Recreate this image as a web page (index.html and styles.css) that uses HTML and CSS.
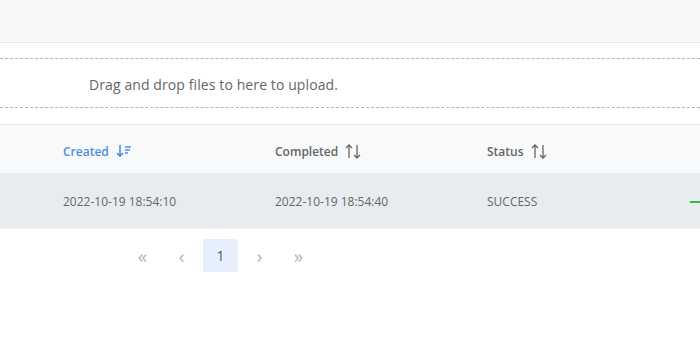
FILE: index.html
```html
<!DOCTYPE html>
<html lang="en">
<head>
    <meta charset="UTF-8">
    <title>Uploads</title>
    <link rel="stylesheet" href="styles.css">
</head>
<body>
    <div class="toolbar"></div>

    <div class="upload-area">
        <div class="dropzone">Drag and drop files to here to upload.</div>
    </div>

    <div class="table">
        <div class="table-row table-head">
            <div class="cell spacer"></div>
            <div class="cell sorted">
                <span>Created</span>
                <svg class="sort-icon" width="16" height="14" viewBox="0 0 16 14">
                    <path d="M4 1v11M1 9l3 3 3-3" fill="none" stroke="currentColor" stroke-width="1.6"/>
                    <path d="M9 3h6M9 6h5M9 9h3" fill="none" stroke="currentColor" stroke-width="1.6"/>
                </svg>
            </div>
            <div class="cell">
                <span>Completed</span>
                <svg class="sort-icon" width="16" height="17" viewBox="0 0 16 17">
                    <path d="M4 15V2M1 5l3-3 3 3M12 2v13M9 12l3 3 3-3" fill="none" stroke="currentColor" stroke-width="1.3"/>
                </svg>
            </div>
            <div class="cell">
                <span>Status</span>
                <svg class="sort-icon" width="16" height="17" viewBox="0 0 16 17">
                    <path d="M4 15V2M1 5l3-3 3 3M12 2v13M9 12l3 3 3-3" fill="none" stroke="currentColor" stroke-width="1.3"/>
                </svg>
            </div>
            <div class="cell last"></div>
        </div>
        <div class="table-row table-body">
            <div class="cell spacer"></div>
            <div class="cell">2022-10-19 18:54:10</div>
            <div class="cell">2022-10-19 18:54:40</div>
            <div class="cell">SUCCESS</div>
            <div class="cell last"><span class="progress"></span></div>
        </div>
    </div>

    <div class="pagination">
        <span class="page-btn">&laquo;</span>
        <span class="page-btn">&lsaquo;</span>
        <span class="page-btn active">1</span>
        <span class="page-btn">&rsaquo;</span>
        <span class="page-btn">&raquo;</span>
    </div>
</body>
</html>
```

FILE: styles.css
```css
body {
    margin: 0;
    font-family: "Open Sans", "Noto Sans", sans-serif;
    background-color: #fff;
    color: #555;
    overflow: hidden;
}
.toolbar {
    height: 42px;
    background-color: #f7f8fa;
    border-bottom: 1px solid #e3e6ea;
}
.upload-area {
    padding: 15px 0 16px;
    border-bottom: 1px solid #e3e6ea;
}
.dropzone {
    border-top: 1px dashed #b5b5b5;
    border-bottom: 1px dashed #b5b5b5;
    height: 48px;
    line-height: 51px;
    padding-left: 89px;
    font-size: 14px;
    letter-spacing: 0.1px;
    color: #666;
}
.table-row {
    display: grid;
    grid-template-columns: 51px 212px 212px 212px 1fr;
    font-size: 12px;
}
.cell {
    padding-left: 12px;
    display: flex;
    align-items: center;
}
.cell.spacer,
.cell.last {
    padding: 0;
}
.table-head {
    height: 48px;
    background-color: #f8f9fb;
    font-weight: 600;
    color: #666;
}
.table-head .cell {
    padding-top: 4px;
}
.sort-icon {
    margin-left: 7px;
    color: #666;
}
.table-head .sorted {
    color: #4a90e2;
}
.table-head .sorted .sort-icon {
    color: #4a90e2;
}
.table-body {
    height: 55px;
    background-color: #e9ecef;
    border-bottom: 1px solid #f2f3f5;
    color: #666;
}
.table-body .cell {
    padding-top: 2px;
}
.progress {
    display: block;
    width: 10px;
    height: 2px;
    margin-left: 3px;
    background-color: #3cb83c;
}
.pagination {
    display: flex;
    align-items: center;
    padding: 10px 0 0 125px;
}
.page-btn {
    width: 35px;
    height: 33px;
    margin-right: 4px;
    display: flex;
    justify-content: center;
    align-items: center;
    font-size: 19px;
    color: #b5b5b5;
}
.page-btn.active {
    background-color: #e5f0fc;
    color: #555;
    font-size: 14px;
    border-radius: 2px;
}
```
